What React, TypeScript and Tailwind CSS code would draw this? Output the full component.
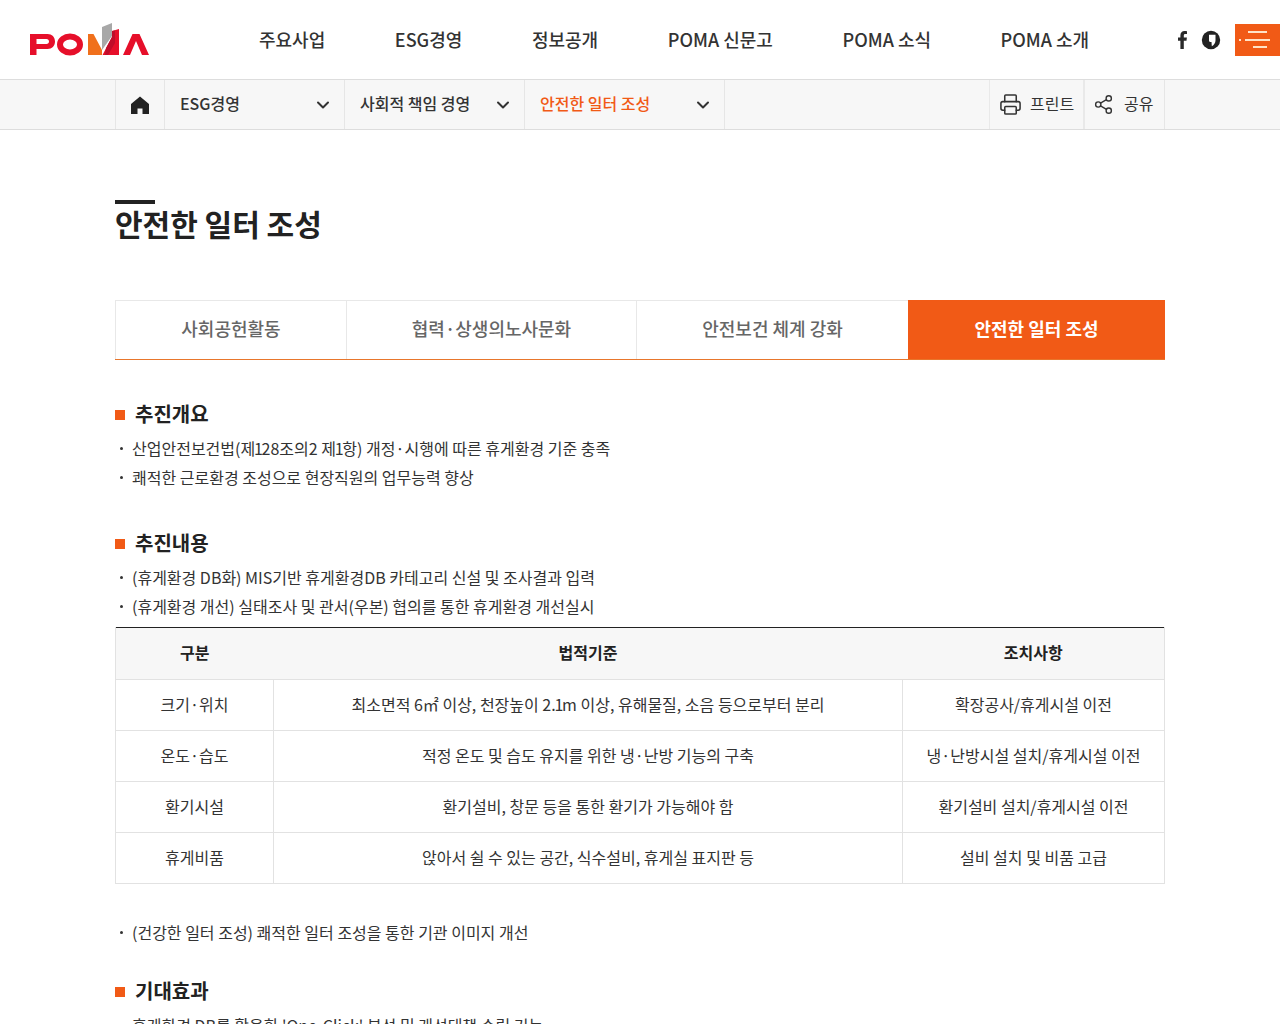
import React from "react";
import { ChevronDown, Printer, Share2 } from "lucide-react";

function Logo() {
  return (
    <svg width="120" height="34" viewBox="0 0 120 34" className="block">
      <path fillRule="evenodd" d="M0 32V11H17.5C22 11 25 14 25 18.5C25 23 22 26 17.5 26H6.5V32ZM6.5 16V21H16.5C18 21 19 20 19 18.5C19 17 18 16 16.5 16Z" fill="#e60f2a" />
      <ellipse cx="40" cy="21.5" rx="10" ry="8" fill="none" stroke="#e60f2a" strokeWidth="6" />
      <path d="M58 32V11H63.5L72 27V32H65L65 22L65 32Z" fill="#f0701c" />
      <path d="M72 4L82 0V13L72 27Z" fill="#a8a8a8" />
      <path d="M72.5 32L82 14V8L89 6V32Z" fill="#e60f2a" />
      <path d="M76 25L82 14V8L85 7.5V20L78 32H75Z" fill="#c00d2a" />
      <path d="M93 32L102.5 11H109.5L119 32H112L106 18L100 32Z" fill="#e60f2a" />
    </svg>
  );
}

function One() {
  return <span className="mx-[-1.25px]">1</span>;
}

function Bullet({ children }: { children: React.ReactNode }) {
  return (
    <li className="relative h-[29px] pl-[17px] text-[16px] leading-[28px] text-[#333]">
      <span className="absolute left-[5px] top-[13px] h-[3px] w-[3px] rounded-full bg-[#333]" />
      {children}
    </li>
  );
}

function Heading({ children }: { children: React.ReactNode }) {
  return (
    <h3 className="flex h-[30px] items-center gap-[10px] text-[20px] font-bold leading-[30px] text-[#222]">
      <span className="mt-[1px] h-[10px] w-[10px] bg-[#f15a16]" />
      {children}
    </h3>
  );
}

const rows: [string, React.ReactNode, string][] = [
  ["크기·위치", <>최소면적 6㎡ 이상, 천장높이 2.<One />m 이상, 유해물질, 소음 등으로부터 분리</>, "확장공사/휴게시설 이전"],
  ["온도·습도", "적정 온도 및 습도 유지를 위한 냉·난방 기능의 구축", "냉·난방시설 설치/휴게시설 이전"],
  ["환기시설", "환기설비, 창문 등을 통한 환기가 가능해야 함", "환기설비 설치/휴게시설 이전"],
  ["휴게비품", "앉아서 쉴 수 있는 공간, 식수설비, 휴게실 표지판 등", "설비 설치 및 비품 고급"],
];

const tabClass = "flex items-center justify-center border-t border-[#e8e8e8] pb-[3px] text-[#666]";

export default function App() {
  return (
    <div className="h-[1024px] overflow-hidden bg-white font-['Noto_Sans_CJK_KR','Noto_Sans',sans-serif] text-[#333]">
      <header className="flex h-[80px] items-center border-b border-[#ddd]">
        <div className="ml-[30px] w-[229px]"><Logo /></div>
        <nav className="flex gap-[69.6px] text-[18px] font-medium text-[#333]">
          <a>주요사업</a><a>ESG경영</a><a>정보공개</a><a>POMA 신문고</a><a>POMA 소식</a><a>POMA 소개</a>
        </nav>
        <div className="ml-auto flex items-center">
          <svg width="12" height="20" viewBox="0 0 12 20" className="mr-[12px]"><path d="M3.4 19V10.7H1V7.6H3.4V5.3C3.4 2.6 5 1 7.4 1C8.5 1 9.5 1.1 10 1.2V4H8.4C7.1 4 6.8 4.6 6.8 5.5V7.6H9.9L9.5 10.7H6.8V19Z" fill="#2a2a2a" /></svg>
          <svg width="20" height="20" viewBox="0 0 20 20" className="mr-[14px]"><circle cx="10" cy="10" r="9.2" fill="#222" /><path d="M8 4.8H14.5V10.5C14.5 13 13 15 10.8 16.2L10.5 12H9.5C8.6 12 8 11.3 8 10.5Z" fill="#fff" /></svg>
          <button className="relative h-[32px] w-[45px] bg-[#f15a16]">
            <span className="absolute left-[13px] top-[7px] h-[2px] w-[19px] bg-[#ffe3c8]" />
            <span className="absolute left-[10px] top-[15px] h-[2px] w-[25px] bg-[#ffe3c8]" />
            <span className="absolute left-[4px] top-[15px] h-[2px] w-[2px] bg-[#ffe3c8]" />
            <span className="absolute left-[18px] top-[22px] h-[2px] w-[14px] bg-[#ffe3c8]" />
          </button>
        </div>
      </header>

      <div className="h-[50px] border-b border-[#ddd] bg-[#f7f7f7]">
        <div className="mx-auto flex h-[49px] w-[1050px] items-stretch text-[16px] font-medium text-[#333]">
          <div className="flex w-[50px] items-center justify-center border-x border-[#e6e6e6]">
            <svg width="18" height="18" viewBox="0 0 18 18"><path d="M9 0.5L18 8V18H11.5V12.5H6.5V18H0V8Z" fill="#222" /></svg>
          </div>
          <div className="flex w-[180px] items-center justify-between border-r border-[#e6e6e6] pl-[15px] pr-[11px]">
            <span className="pb-[4px]">ESG경영</span><ChevronDown size={20} strokeWidth={2.4} className="text-[#333]" />
          </div>
          <div className="flex w-[180px] items-center justify-between border-r border-[#e6e6e6] pl-[15px] pr-[11px]">
            <span className="pb-[4px]">사회적 책임 경영</span><ChevronDown size={20} strokeWidth={2.4} className="text-[#333]" />
          </div>
          <div className="flex w-[200px] items-center justify-between border-r border-[#e6e6e6] pl-[15px] pr-[11px]">
            <span className="pb-[4px] text-[#f15a16]">안전한 일터 조성</span><ChevronDown size={20} strokeWidth={2.4} className="text-[#333]" />
          </div>
          <div className="ml-auto flex w-[96px] items-center gap-[8px] border-l border-r-2 border-[#e9e9e9] pl-[9px] font-normal">
            <Printer size={23} strokeWidth={1.6} className="text-[#333]" /><span className="pb-[4px]">프린트</span>
          </div>
          <div className="flex w-[80px] items-center gap-[10px] border-r border-[#e6e6e6] pl-[8px] font-normal">
            <Share2 size={21} strokeWidth={1.6} className="text-[#333]" /><span className="pb-[4px]">공유</span>
          </div>
        </div>
      </div>

      <main className="mx-auto w-[1050px]">
        <div className="mt-[70px] h-[4px] w-[40px] bg-[#222]" />
        <h2 className="-mt-[1px] h-[97px] text-[30px] font-bold leading-[40px] text-[#222]">안전한 일터 조성</h2>

        <div className="flex h-[59px] text-[18px] font-medium">
          <div className={tabClass + " w-[232px] border-x"}>사회공헌활동</div>
          <div className={tabClass + " w-[290px] border-r"}>협력·상생의노사문화</div>
          <div className={tabClass + " w-[271px]"}>안전보건 체계 강화</div>
          <div className="flex flex-1 items-center justify-center bg-[#f15a16] pb-[3px] font-bold text-white">안전한 일터 조성</div>
        </div>
        <div className="h-[1px] bg-[#e8762c]" />

        <section className="mt-[39px]">
          <Heading>추진개요</Heading>
          <ul className="mt-[5px]">
            <Bullet>산업안전보건법(제<One />28조의2 제<One />항) 개정·시행에 따른 휴게환경 기준 충족</Bullet>
            <Bullet>쾌적한 근로환경 조성으로 현장직원의 업무능력 향상</Bullet>
          </ul>
        </section>

        <section className="mt-[36px]">
          <Heading>추진내용</Heading>
          <ul className="mt-[5px]">
            <Bullet>(휴게환경 DB화) MIS기반 휴게환경DB 카테고리 신설 및 조사결과 입력</Bullet>
            <Bullet>(휴게환경 개선) 실태조사 및 관서(우본) 협의를 통한 휴게환경 개선실시</Bullet>
          </ul>
        </section>

        <table className="mt-[6px] w-full table-fixed border-collapse border-t border-[#222] text-center text-[16px] text-[#333]">
          <colgroup>
            <col className="w-[158px]" /><col className="w-[629px]" /><col />
          </colgroup>
          <thead>
            <tr className="h-[52px] bg-[#f7f7f7] text-[#222]">
              <th className="border-b border-l border-[#e2e2e2] pb-[3px] font-bold">구분</th>
              <th className="border-b border-[#e2e2e2] pb-[3px] font-bold">법적기준</th>
              <th className="border-r border-b border-[#e2e2e2] pb-[3px] font-bold">조치사항</th>
            </tr>
          </thead>
          <tbody>
            {rows.map((r) => (
              <tr key={r[0]} className="h-[51px]">
                <td className="border border-[#e2e2e2] pb-[3px]">{r[0]}</td>
                <td className="border border-[#e2e2e2] pb-[3px]">{r[1]}</td>
                <td className="border border-[#e2e2e2] pb-[3px]">{r[2]}</td>
              </tr>
            ))}
          </tbody>
        </table>

        <ul className="mt-[34px]">
          <Bullet>(건강한 일터 조성) 쾌적한 일터 조성을 통한 기관 이미지 개선</Bullet>
        </ul>

        <section className="mt-[29px]">
          <Heading>기대효과</Heading>
          <ul className="mt-[5px]">
            <Bullet>휴게환경 DB를 활용한 'One-Click' 분석 및 개선대책 수립 기능</Bullet>
          </ul>
        </section>
      </main>
    </div>
  );
}
